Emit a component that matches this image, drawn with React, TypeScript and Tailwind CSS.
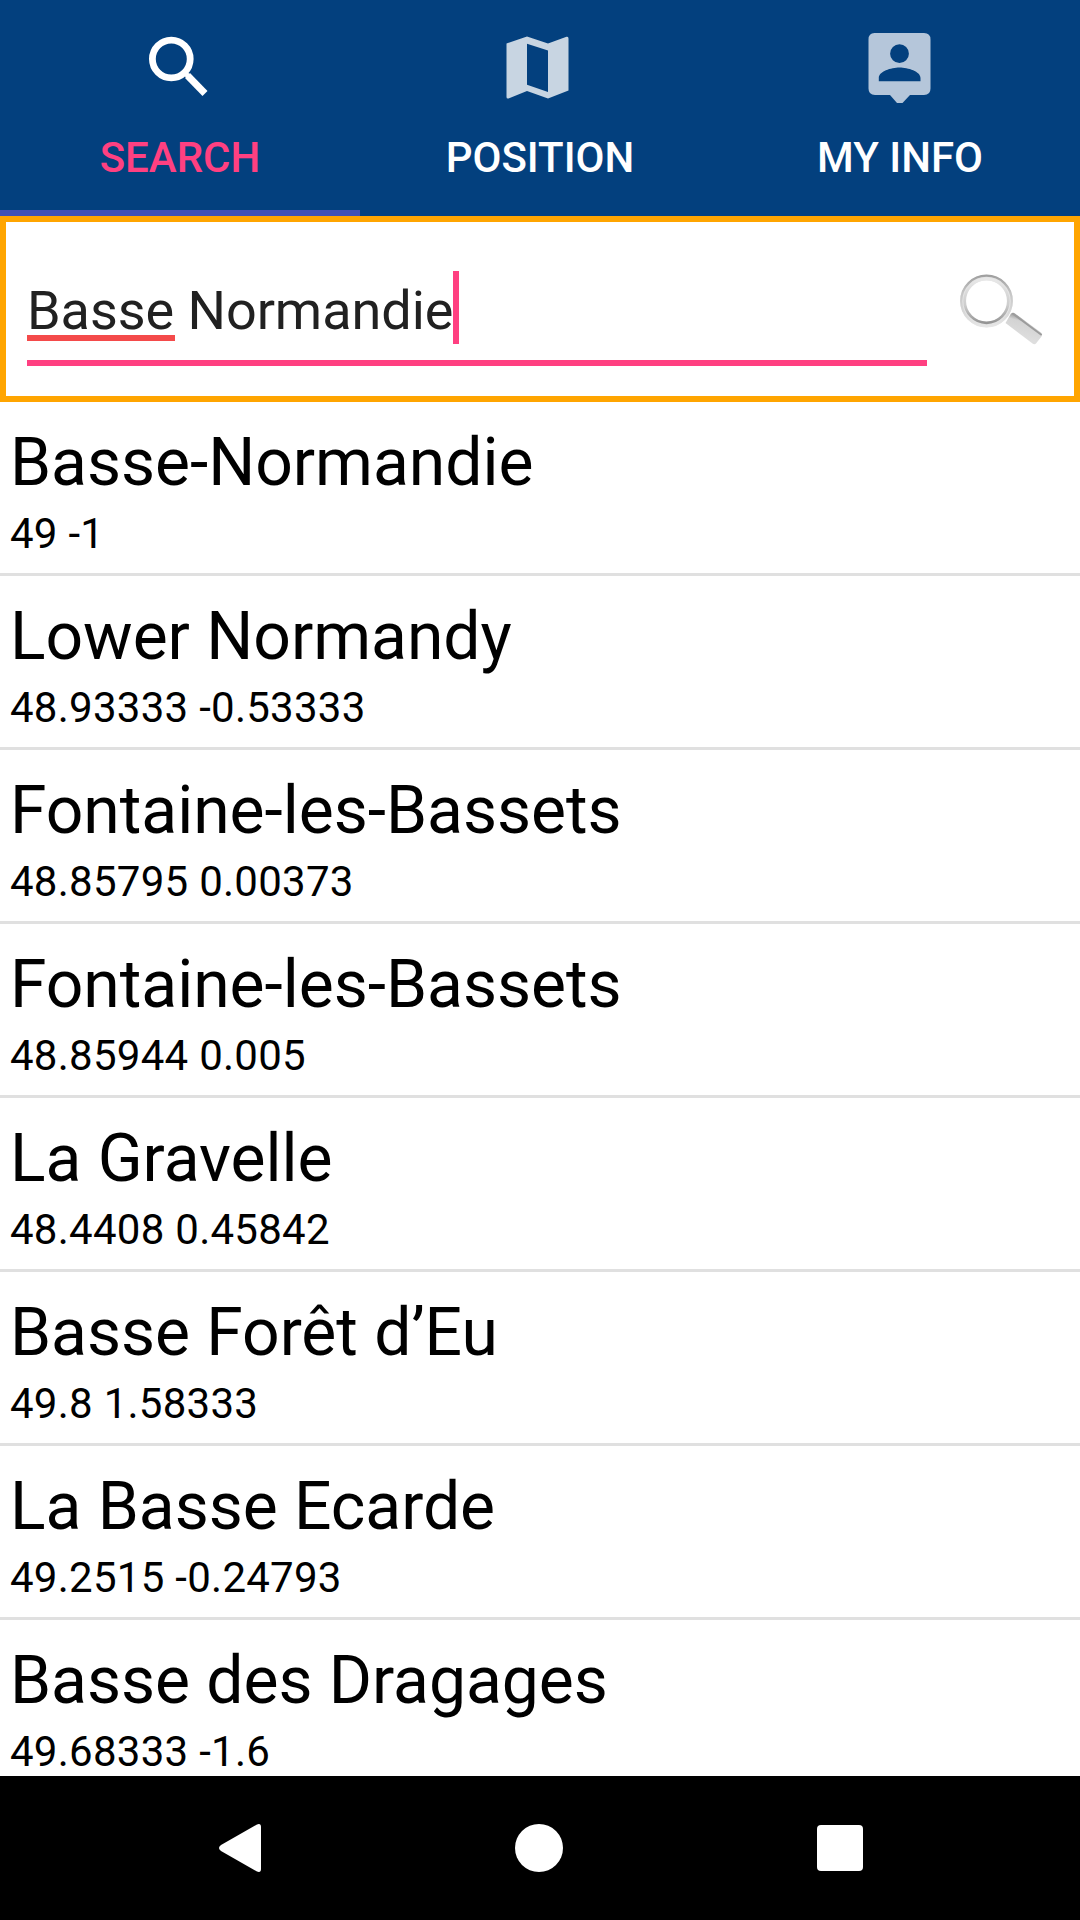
const results = [
    { name: "Basse-Normandie", coords: "49 -1" },
    { name: "Lower Normandy", coords: "48.93333 -0.53333" },
    { name: "Fontaine-les-Bassets", coords: "48.85795 0.00373" },
    { name: "Fontaine-les-Bassets", coords: "48.85944 0.005" },
    { name: "La Gravelle", coords: "48.4408 0.45842" },
    { name: "Basse Forêt d’Eu", coords: "49.8 1.58333" },
    { name: "La Basse Ecarde", coords: "49.2515 -0.24793" },
    { name: "Basse des Dragages", coords: "49.68333 -1.6" },
]

const SearchIcon = () => (
    <svg width={72} height={72} viewBox="0 0 72 72" fill="none" stroke="#ffffff">
        <circle cx="27.300" cy="27" r="18.900" strokeWidth="6.800" />
        <path d="M40.500 40.500L45 45" strokeWidth="5" />
        <path d="M43.500 43.500L61 61.500" strokeWidth="7" />
    </svg>
)

const MapIcon = () => (
    <svg width={72} height={72} viewBox="0 0 72 72" fill="#c8d5e2">
        <path fillRule="evenodd" d="M2.500 11.500L23 4.500L44 11.500L62.500 4.800Q64.500 4.200 64.500 6.500V58.500L44 66.500L23 59L4.500 66.500Q2.500 67 2.500 65ZM23 11.800V52.700L44 60V18.500Z" />
    </svg>
)

const PersonIcon = () => (
    <svg width={72} height={72} viewBox="0 0 72 72" fill="#b5c6da">
        <path fillRule="evenodd" d="M10.500 1H60Q66.500 1 66.500 7.500V56.500Q66.500 63 60 63H46L38.500 71H33L26 63H11Q4.500 63 4.500 56.500V7.500Q4.500 1 10.500 1ZM35.500 12.300A9.400 9.400 0 1 0 35.500 31.100A9.400 9.400 0 1 0 35.500 12.300ZM14.800 49.200H56.500V46C56.500 39.500 44 35.500 35.500 35.500S14.800 39.500 14.800 46Z" />
    </svg>
)

const GlassIcon = () => (
    <svg width={96} height={96} viewBox="0 0 96 96" fill="none">
        <defs>
            <linearGradient id="outer" x1="0" y1="0" x2="0" y2="1">
                <stop offset="0" stopColor="#a0a0a0" />
                <stop offset="0.35" stopColor="#c6c6c6" />
                <stop offset="1" stopColor="#e6e6e6" />
            </linearGradient>
            <linearGradient id="inner" x1="0" y1="0" x2="0" y2="1">
                <stop offset="0" stopColor="#e8e8e8" />
                <stop offset="0.6" stopColor="#cdcdcd" />
                <stop offset="1" stopColor="#949494" />
            </linearGradient>
            <linearGradient id="handle" x1="0.6" y1="0.2" x2="0.4" y2="0.8">
                <stop offset="0" stopColor="#a8a8a8" />
                <stop offset="0.2" stopColor="#d3d3d3" />
                <stop offset="1" stopColor="#dedede" />
            </linearGradient>
        </defs>
        <circle cx="38.500" cy="36" r="23.500" stroke="#e4e4e4" strokeWidth="5.500" />
        <circle cx="38.500" cy="36" r="25.300" stroke="url(#outer)" strokeWidth="2.200" />
        <circle cx="38.500" cy="36" r="21.800" stroke="url(#inner)" strokeWidth="2.700" />
        <path d="M63 48.500Q65 47 67 48.500L93 67.500Q95 69.500 93.500 71.500L88 78.500Q86.500 80 84.500 78.500L57.500 58Z" fill="url(#handle)" />
        <path d="M65 48.800L93 69.500" stroke="#9c9c9c" strokeWidth="2" strokeLinecap="round" />
    </svg>
)

const App = () => {
    return (
        <div className="w-[1080px] h-[1920px] flex flex-col overflow-hidden bg-white font-['Roboto',sans-serif]">
            {/* tabs */}
            <div className="grid grid-cols-3 h-[216px] shrink-0 bg-[#03407e] text-white text-[42px] leading-[50px] font-medium">
                <div className="flex flex-col items-center pt-8 border-b-6 border-[#3f51b5]">
                    <SearchIcon />
                    <span className="mt-[29px] text-[#ff4081]">SEARCH</span>
                </div>
                <div className="flex flex-col items-center pt-8">
                    <MapIcon />
                    <span className="mt-[29px]">POSITION</span>
                </div>
                <div className="flex flex-col items-center pt-8">
                    <PersonIcon />
                    <span className="mt-[29px]">MY INFO</span>
                </div>
            </div>
            {/* search box */}
            <div className="flex h-[186px] shrink-0 border-6 border-[#ffa500] pl-[21px]">
                <div className="flex w-[900px] h-[144px] items-end border-b-6 border-[#ff4081] pb-[13px] text-[54px] leading-[73px] tracking-[-0.06px] text-[#212121]">
                    <span className="relative">
                        Basse
                        <span className="absolute left-0 bottom-[6px] w-[148px] h-[6px] bg-[#f44a4a]"></span>
                    </span>
                    <span className="whitespace-pre"> Normandie</span>
                    <span className="w-[6px] h-[73px] mb-[3px] bg-[#ff4081]"></span>
                </div>
                <div className="ml-[21px] mt-[43px]">
                    <GlassIcon />
                </div>
            </div>
            {/* results */}
            <div className="flex-1 min-h-0 overflow-hidden text-black">
                {results.map((item, i) => (
                    <div key={i} className="h-[174px] border-b-3 border-[#e0e0e0] pt-[17px] pl-[10px]">
                        <p className="text-[66px] leading-[88px] tracking-[-0.04px]">{item.name}</p>
                        <p className="text-[42px] leading-[54px] tracking-[0.27px]">{item.coords}</p>
                    </div>
                ))}
            </div>
            {/* navigation bar */}
            <div className="flex h-[144px] shrink-0 items-center justify-between bg-black pl-[219px] pr-[217px]">
                <svg width={42} height={48} viewBox="0 0 42 48" fill="#ffffff">
                    <path d="M37.500 0.700Q42 -1.200 42 3V45Q42 49.200 37.500 47.300L2 27Q-2 24 2 21Z" />
                </svg>
                <div className="w-12 h-12 rounded-full bg-white"></div>
                <div className="w-[46px] h-[46px] rounded-[4px] bg-white"></div>
            </div>
        </div>
    )
}

export default App
